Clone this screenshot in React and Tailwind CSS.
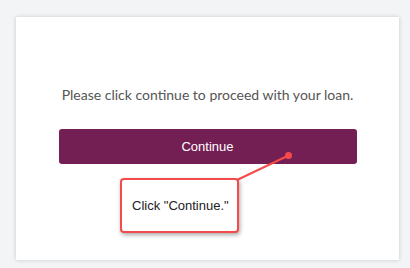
import React from "react";

export default function App() {
  return (
    <div className="w-[410px] h-[268px] bg-[#f3f4f6] pt-[17px] pl-4 relative overflow-hidden">
      <div className="w-[383px] h-[243px] bg-white shadow-[0_0_4px_rgba(0,0,0,0.18)] flex flex-col items-center pt-[69px]">
        <p className="text-[14px] leading-[18px] text-[#555] font-['Lato',sans-serif]">
          Please click continue to proceed with your loan.
        </p>
        <button className="mt-[25px] w-[298px] h-[35px] rounded-[3px] bg-[#731f53] text-white text-[13px] font-['Liberation_Sans',Arial,sans-serif]">
          Continue
        </button>
      </div>
      <svg className="absolute left-0 top-0" width="410" height="268">
        <line x1="237" y1="180" x2="288.5" y2="155.5" stroke="#f44a4a" strokeWidth="2" />
        <circle cx="288.5" cy="155.5" r="3.5" fill="#f44a4a" />
      </svg>
      <div className="absolute left-[120px] top-[178px] w-[119px] h-[55px] bg-white border-2 border-[#f44a4a] rounded-[4px] shadow-[1px_2px_4px_rgba(0,0,0,0.35)] flex items-center pl-[10px] text-[13px] text-[#222] font-['Liberation_Sans',Arial,sans-serif]">
        Click "Continue."
      </div>
    </div>
  );
}
